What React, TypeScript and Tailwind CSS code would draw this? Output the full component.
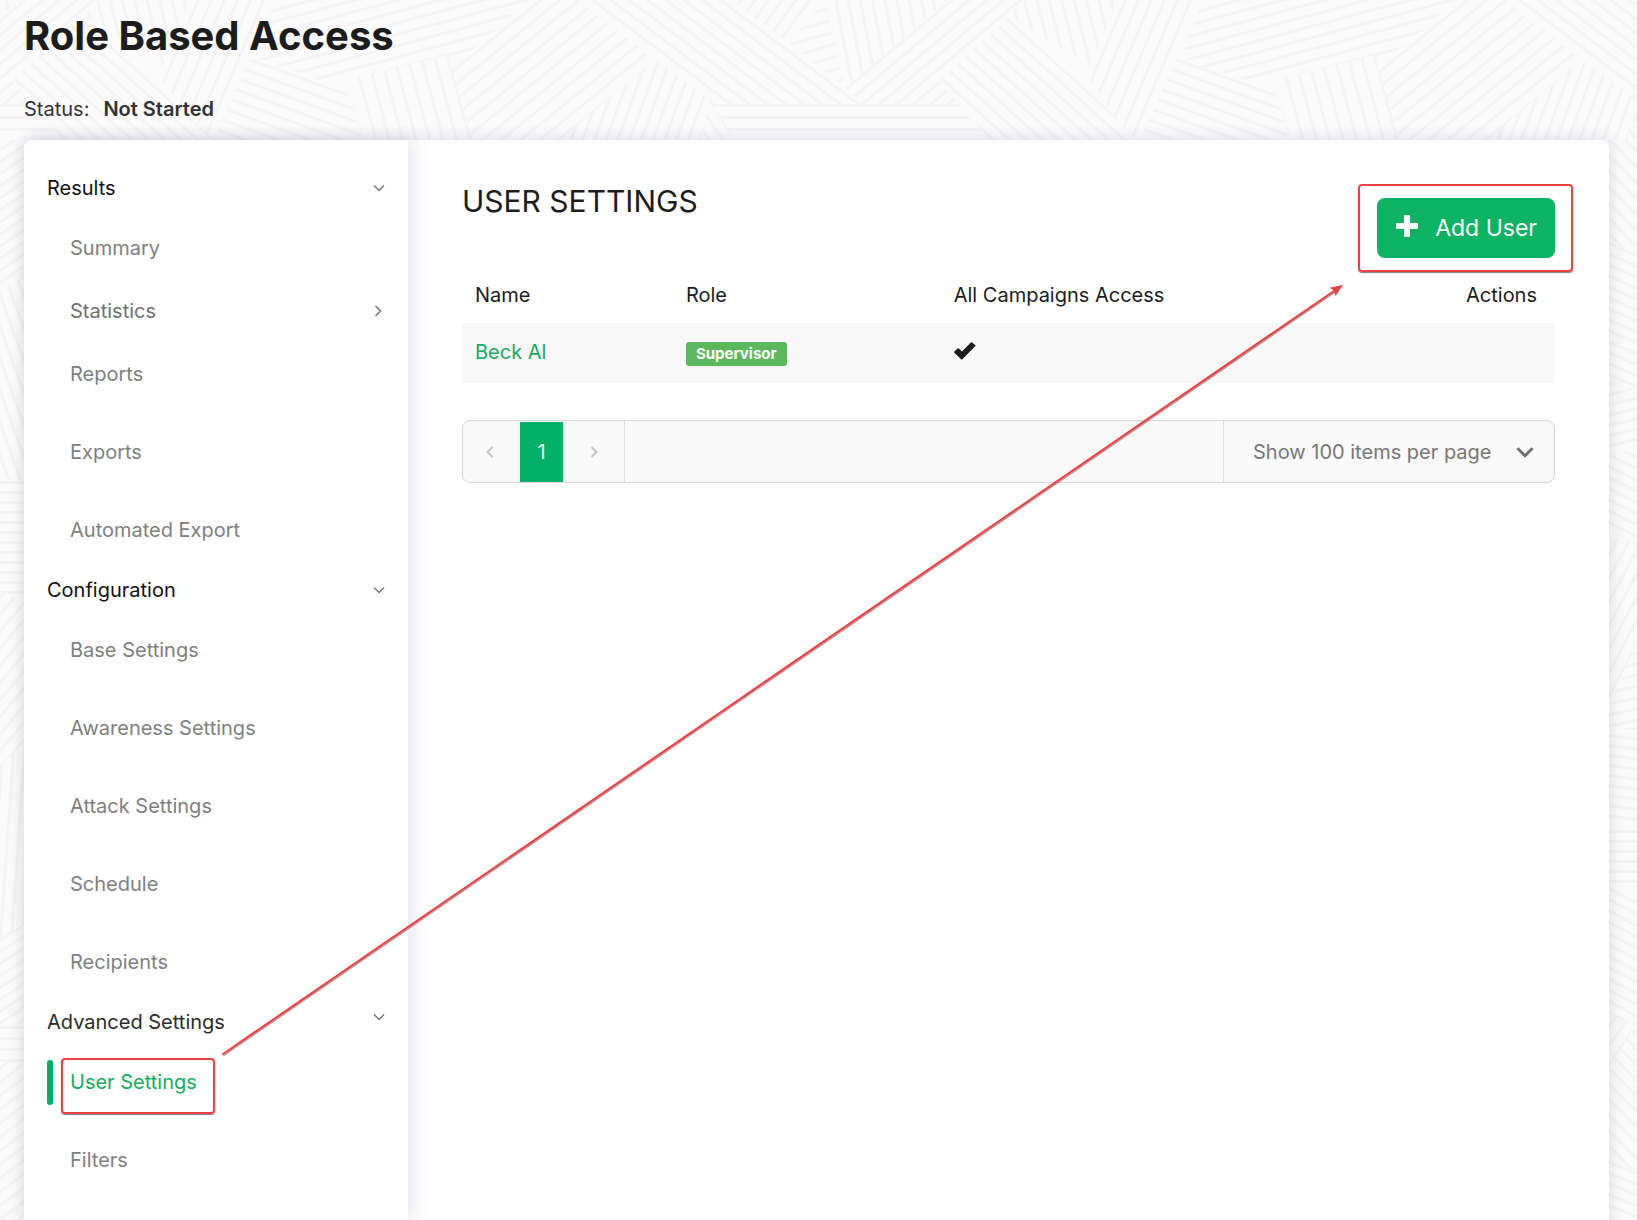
import React from "react";

type Facet = { points: string; angle: number; gap: number; ox: number; oy: number };

const TOP_TILE: Facet[] = [
  { points: "99,0 195,0 163,65 80,15", angle: 76, gap: 12, ox: 99, oy: 0 },
  { points: "190,0 275,0 213,140 200,132 160,78", angle: -67, gap: 12, ox: 275, oy: 0 },
  { points: "275,0 530,0 470,52 330,85 253,58", angle: -15, gap: 11, ox: 330, oy: 85 },
  { points: "250,58 348,90 362,140 213,140", angle: 20, gap: 11, ox: 250, oy: 58 },
  { points: "348,80 448,55 473,140 363,140", angle: 75, gap: 13, ox: 348, oy: 80 },
  { points: "450,65 470,52 530,0 578,0 655,60 560,140 473,140", angle: -39, gap: 12, ox: 655, oy: 60 },
  { points: "655,60 710,98 700,140 560,140", angle: -70, gap: 11, ox: 657, oy: 60 },
  { points: "578,0 723,0 863,104 715,104", angle: 37, gap: 11, ox: 723, oy: 0 },
  { points: "710,98 735,140 700,140", angle: 57, gap: 11, ox: 710, oy: 98 },
  { points: "730,0 822,0 790,43", angle: -54, gap: 11, ox: 790, oy: 43 },
  { points: "825,0 845,88 790,43", angle: -16, gap: 12, ox: 790, oy: 43 },
  { points: "825,0 948,0 845,88", angle: 79, gap: 12, ox: 825, oy: 0 },
  { points: "845,88 948,0 1026,0 1008,20 940,80 958,104 863,104", angle: -40, gap: 11, ox: 845, oy: 88 },
  { points: "1008,18 1141,140 990,140 940,80", angle: 42, gap: 11, ox: 1008, oy: 18 },
  { points: "712,104 958,104 990,140 735,140", angle: 0, gap: 12, ox: 712, oy: 104 },
];

const SIDE_FACETS: Facet[] = [
  { points: "0,140 40,140 40,270 0,288", angle: -34, gap: 10, ox: 0, oy: 160 },
  { points: "0,288 40,270 40,480 0,480", angle: 70, gap: 11, ox: 0, oy: 290 },
  { points: "0,480 40,480 40,606 0,592", angle: 0, gap: 10, ox: 0, oy: 481 },
  { points: "0,592 40,606 40,730 0,766", angle: -50, gap: 11, ox: 0, oy: 766 },
  { points: "0,766 40,730 40,915 0,938", angle: -86, gap: 11, ox: 0, oy: 766 },
  { points: "0,938 40,915 40,1025 0,1025", angle: -33, gap: 10, ox: 0, oy: 938 },
  { points: "0,1025 40,1025 40,1062 0,1062", angle: 0, gap: 11, ox: 0, oy: 1026 },
  { points: "0,1062 40,1062 40,1220 0,1220", angle: -37, gap: 11, ox: 0, oy: 1080 },
  { points: "1600,140 1637,140 1637,254 1600,238", angle: 46, gap: 11, ox: 1637, oy: 150 },
  { points: "1600,238 1637,254 1637,390 1600,378", angle: 24, gap: 10, ox: 1637, oy: 254 },
  { points: "1600,378 1637,390 1637,448 1600,458", angle: -14, gap: 10, ox: 1637, oy: 448 },
  { points: "1600,458 1637,448 1637,546 1600,528", angle: 27, gap: 10, ox: 1637, oy: 546 },
  { points: "1600,528 1637,546 1637,640 1600,738", angle: -62, gap: 11, ox: 1637, oy: 640 },
  { points: "1637,640 1637,728 1600,728", angle: -12, gap: 11, ox: 1637, oy: 640 },
  { points: "1605,728 1637,728 1637,828 1600,824", angle: 7, gap: 10, ox: 1637, oy: 828 },
  { points: "1600,828 1637,828 1637,890 1600,890", angle: 0, gap: 10, ox: 1637, oy: 830 },
  { points: "1600,884 1637,898 1637,1026 1600,1010", angle: 28, gap: 10, ox: 1637, oy: 1026 },
  { points: "1600,1010 1637,1026 1600,1100", angle: -55, gap: 11, ox: 1637, oy: 1022 },
  { points: "1637,1022 1637,1172 1600,1156 1600,1085", angle: 45, gap: 11, ox: 1637, oy: 1172 },
  { points: "1600,1156 1637,1172 1637,1220 1600,1220", angle: 22, gap: 10, ox: 1637, oy: 1172 },
];

function Hatch({ facets, name }: { facets: Facet[]; name: string }) {
  return (
    <>
      {facets.map((f, i) => (
        <g key={i}>
          <pattern
            id={`${name}-${i}`}
            width={200}
            height={f.gap}
            patternUnits="userSpaceOnUse"
            patternTransform={`translate(${f.ox} ${f.oy}) rotate(${f.angle})`}
          >
            <rect width={200} height={f.gap} fill="#fafafa" />
            <rect width={200} height={3} fill="#f3f3f3" />
          </pattern>
          <polygon points={f.points} fill={`url(#${name}-${i})`} />
        </g>
      ))}
    </>
  );
}

function Backdrop() {
  return (
    <svg aria-hidden="true" className="absolute inset-0 h-full w-full" preserveAspectRatio="xMinYMin slice">
      <g id="facet-tile">
        <Hatch facets={TOP_TILE} name="top" />
      </g>
      <use href="#facet-tile" x={-927} />
      <use href="#facet-tile" x={927} />
      <Hatch facets={SIDE_FACETS} name="side" />
    </svg>
  );
}

function Chevron({ dir, className }: { dir: "down" | "left" | "right"; className: string }) {
  const d = { down: "M1 3.5 6 8.5 11 3.5", left: "M8.5 1 3.5 6 8.5 11", right: "M3.5 1 8.5 6 3.5 11" }[dir];
  return (
    <svg aria-hidden="true" viewBox="0 0 12 12" className={className} fill="none" stroke="currentColor">
      <path d={d} />
    </svg>
  );
}

function PlusIcon() {
  return (
    <svg aria-hidden="true" viewBox="0 0 24 24" className="mb-1 size-6" fill="currentColor">
      <rect x="1" y="9" width="22" height="6" rx="1" />
      <rect x="9" y="1" width="6" height="22" rx="1" />
    </svg>
  );
}

function CheckIcon() {
  return (
    <svg role="img" aria-label="Yes" viewBox="0 0 22 18" className="mb-1 h-[18px] w-[22px]" fill="currentColor">
      <path d="M.4 9.600 3.600 6.400q.6-.5 1.200 0L8 9.400 16.800.6q.6-.6 1.300-.1l3 2.500q.7.600.1 1.300L8.300 17.200q-.6.600-1.200 0L.4 10.700q-.5-.5 0-1.100Z" />
    </svg>
  );
}

type Item = { label: string; tight?: boolean; expandable?: boolean; active?: boolean };
type Section = { title: string; items: Item[]; tone: string; chevron: string };

const SECTIONS: Section[] = [
  {
    title: "Results",
    tone: "text-[#111]",
    chevron: "pb-0",
    items: [
      { label: "Summary", tight: true },
      { label: "Statistics", tight: true, expandable: true },
      { label: "Reports" },
      { label: "Exports" },
      { label: "Automated Export" },
    ],
  },
  {
    title: "Configuration",
    tone: "text-[#111]",
    chevron: "pb-0",
    items: [
      { label: "Base Settings" },
      { label: "Awareness Settings" },
      { label: "Attack Settings" },
      { label: "Schedule" },
      { label: "Recipients" },
    ],
  },
  {
    title: "Advanced Settings",
    tone: "text-[#2b2b2b]",
    chevron: "pb-2.5",
    items: [{ label: "User Settings", active: true }, { label: "Filters" }],
  },
];

function NavItem({ item }: { item: Item }) {
  return (
    <li className={`relative last:mb-0 ${item.tight ? "mb-[3px]" : "mb-[18px]"}`}>
      {item.active && <span className="absolute top-2 left-0 h-[45px] w-1.5 rounded-full bg-[#00b067]" />}
      <a
        href="#"
        aria-current={item.active ? "page" : undefined}
        className={`flex h-[60px] items-center justify-between pl-[23px] ${
          item.active ? "text-[#0fae61]" : item.expandable ? "text-[#707070]" : "text-[#808080]"
        }`}
      >
        {item.label}
        {item.expandable && <Chevron dir="right" className="mr-px size-3 stroke-[1.5] text-[#777]" />}
      </a>
      {item.active && (
        <span className="pointer-events-none absolute top-1.5 left-[14px] h-14 w-[154px] rounded-[4px] border-2 border-[#ee4044] shadow-[0_1px_1px_rgba(0,0,0,0.5)]" />
      )}
    </li>
  );
}

function Sidebar() {
  return (
    <nav
      aria-label="Campaign"
      className="w-96 shrink-0 rounded-tl-lg bg-white pt-[18px] pr-[23px] pb-4 pl-[23px] shadow-[6px_0_16px_rgba(90,90,160,0.14)]"
    >
      {SECTIONS.map((s) => (
        <section key={s.title}>
          <button type="button" className={`flex h-[60px] w-full items-center justify-between ${s.tone}`}>
            {s.title}
            <span className={s.chevron}>
              <Chevron dir="down" className="size-3 stroke-[1.5] text-[#777]" />
            </span>
          </button>
          <ul>
            {s.items.map((it) => (
              <NavItem key={it.label} item={it} />
            ))}
          </ul>
        </section>
      ))}
    </nav>
  );
}

function UsersTable() {
  return (
    <table className="w-full table-fixed text-left">
      <thead>
        <tr className="h-14 text-[#1c1c1c]">
          <th className="w-[19.3%] px-[13px] font-normal">Name</th>
          <th className="w-[24.5%] px-[13px] font-normal">Role</th>
          <th className="px-[13px] font-normal">All Campaigns Access</th>
          <th className="w-[18%] px-[18px] text-right font-normal">Actions</th>
        </tr>
      </thead>
      <tbody>
        <tr className="h-[60px] bg-[#f8f8f8]">
          <td className="px-[13px] pb-0.5">
            <a href="#" className="text-[#17ab63]">Beck Al</a>
          </td>
          <td className="px-[13px] pb-0.5">
            <span className="inline-flex h-6 items-center rounded-[3px] bg-[#5cb85c] px-2.5 align-middle text-[15px] font-bold text-white">
              Supervisor
            </span>
          </td>
          <td className="px-[13px] text-[#1c1c1c]">
            <CheckIcon />
          </td>
          <td />
        </tr>
      </tbody>
    </table>
  );
}

function Pagination() {
  return (
    <div className="mt-[37px] flex h-[63px] items-stretch overflow-hidden rounded-lg border border-[#d8d8d8] bg-[#f9f9f9] text-[#777]">
      <button type="button" aria-label="Previous page" className="flex w-[57px] items-center justify-center pr-1 text-[#c4c4c4]">
        <Chevron dir="left" className="size-3 stroke-2" />
      </button>
      <button type="button" aria-current="page" className="mt-px w-[43px] bg-[#00b067] text-white">
        1
      </button>
      <button type="button" aria-label="Next page" className="flex w-[62px] items-center justify-center border-r border-[#dedede] text-[#c4c4c4]">
        <Chevron dir="right" className="size-3 stroke-2" />
      </button>
      <div className="flex-1" />
      <div className="relative flex w-[331px] items-center border-l border-[#dedede]">
        <select aria-label="Items per page" className="h-full w-full appearance-none bg-transparent pl-[29px] outline-none">
          <option>Show 100 items per page</option>
        </select>
        <span className="pointer-events-none absolute right-5">
          <Chevron dir="down" className="size-[18px] stroke-2 text-[#6f6f6f]" />
        </span>
      </div>
    </div>
  );
}

function Pointer() {
  return (
    <svg aria-hidden="true" className="pointer-events-none absolute inset-0 h-full w-full">
      <path d="M224 1055 1335 292" stroke="#8a5a5a" strokeOpacity="0.6" strokeWidth="2" strokeLinecap="round" />
      <path d="M223 1054 1334 291" stroke="#ee4044" strokeWidth="2" strokeLinecap="round" />
      <path d="M1343 285 1335.500 296 1334 291 1330 287.500Z" fill="#ee4044" />
    </svg>
  );
}

export default function App() {
  return (
    <div className="relative flex h-screen flex-col overflow-hidden bg-[#fafafa] font-['Inter',sans-serif] text-[20px] leading-7">
      <Backdrop />
      <header className="relative px-6 pt-3">
        <h1 className="text-[40px] leading-12 font-bold text-[#1c1c1c]">Role Based Access</h1>
        <p className="mt-[35px] flex gap-[14px] text-[#333]">
          <span>Status:</span>
          <strong className="font-semibold">Not Started</strong>
        </p>
      </header>
      <div className="relative mt-[17px] mr-7 ml-6 flex flex-1 rounded-t-lg bg-white shadow-[0_0_16px_rgba(80,70,160,0.18)]">
        <Sidebar />
        <main className="min-w-0 flex-1 px-[54px]">
          <div className="flex items-start justify-between">
            <h2 className="mt-[43px] text-[30px] leading-9 text-[#1c1c1c]">USER SETTINGS</h2>
            <div className="relative mt-[58px]">
              <button
                type="button"
                className="flex h-[60px] items-center gap-4 rounded-lg bg-[#0bb363] px-[18px] text-[23px] whitespace-nowrap text-white"
              >
                <PlusIcon />
                Add User
              </button>
              <span className="pointer-events-none absolute -top-3.5 -right-[18px] -bottom-3.5 -left-[19px] rounded-[4px] border-2 border-[#ee4044] shadow-[0_1px_1px_rgba(0,0,0,0.5)]" />
            </div>
          </div>
          <div className="mt-[9px]">
            <UsersTable />
          </div>
          <Pagination />
        </main>
      </div>
      <Pointer />
    </div>
  );
}
